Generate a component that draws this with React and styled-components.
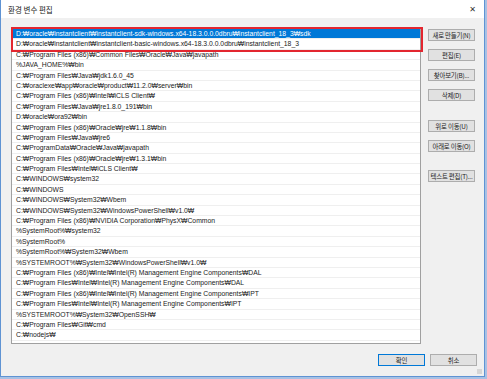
import React from 'react';
import styled, { createGlobalStyle } from 'styled-components';

const paths = [
  "D:₩oracle₩instantclient₩instantclient-sdk-windows.x64-18.3.0.0.0dbru₩instantclient_18_3₩sdk",
  "D:₩oracle₩instantclient₩instantclient-basic-windows.x64-18.3.0.0.0dbru₩instantclient_18_3",
  "C:₩Program Files (x86)₩Common Files₩Oracle₩Java₩javapath",
  "%JAVA_HOME%₩bin",
  "C:₩Program Files₩Java₩jdk1.6.0_45",
  "C:₩oraclexe₩app₩oracle₩product₩11.2.0₩server₩bin",
  "C:₩Program Files (x86)₩Intel₩iCLS Client₩",
  "C:₩Program Files₩Java₩jre1.8.0_191₩bin",
  "D:₩oracle₩ora92₩bin",
  "C:₩Program Files (x86)₩Oracle₩jre₩1.1.8₩bin",
  "C:₩Program Files₩Java₩jre6",
  "C:₩ProgramData₩Oracle₩Java₩javapath",
  "C:₩Program Files (x86)₩Oracle₩jre₩1.3.1₩bin",
  "C:₩Program Files₩Intel₩iCLS Client₩",
  "C:₩WINDOWS₩system32",
  "C:₩WINDOWS",
  "C:₩WINDOWS₩System32₩Wbem",
  "C:₩WINDOWS₩System32₩WindowsPowerShell₩v1.0₩",
  "C:₩Program Files (x86)₩NVIDIA Corporation₩PhysX₩Common",
  "%SystemRoot%₩system32",
  "%SystemRoot%",
  "%SystemRoot%₩System32₩Wbem",
  "%SYSTEMROOT%₩System32₩WindowsPowerShell₩v1.0₩",
  "C:₩Program Files (x86)₩Intel₩Intel(R) Management Engine Components₩DAL",
  "C:₩Program Files₩Intel₩Intel(R) Management Engine Components₩DAL",
  "C:₩Program Files (x86)₩Intel₩Intel(R) Management Engine Components₩IPT",
  "C:₩Program Files₩Intel₩Intel(R) Management Engine Components₩IPT",
  "%SYSTEMROOT%₩System32₩OpenSSH₩",
  "C:₩Program Files₩Git₩cmd",
  "C:₩nodejs₩"
];

const sideButtons = [
  { label: "새로 만들기(N)" },
  { label: "편집(E)" },
  { label: "찾아보기(B)..." },
  { label: "삭제(D)" },
  { label: "위로 이동(U)", space: 11 },
  { label: "아래로 이동(O)" },
  { label: "텍스트 편집(T)...", space: 10 }
];

const App = () => {
  return (
    <>
      <GlobalStyle />
      <Window>
        <TitleBar>
          <Title>환경 변수 편집</Title>
          <Close>✕</Close>
        </TitleBar>
        <Body>
          <Main>
            <ListBox>
              {paths.map((p, i) => (
                <Row key={i} $selected={i === 0}>{p}</Row>
              ))}
              <Highlight />
            </ListBox>
            <Side>
              {sideButtons.map((b, i) => (
                <Button key={i} $space={b.space}>{b.label}</Button>
              ))}
            </Side>
          </Main>
          <Footer>
            <Button $default>확인</Button>
            <Button>취소</Button>
          </Footer>
          <Grip />
        </Body>
      </Window>
    </>
  );
};

export default App;

const GlobalStyle = createGlobalStyle`
  html, body {
    margin: 0;
    padding: 0;
    background: #a7c1e4;
  }
  body {
    font-family: "Liberation Sans", "Noto Sans CJK KR", sans-serif;
  }
`;

const Window = styled.div`
  width: 483px;
  height: 376px;
  border: 1px solid #5f93d3;
  border-top: none;
  background: #f0f0f0;
  display: flex;
  flex-direction: column;
`;

const TitleBar = styled.div`
  height: 18px;
  background: #ffffff;
  display: flex;
  align-items: center;
  justify-content: space-between;
  padding: 0 8px 0 7px;
`;

const Title = styled.div`
  font-family: "Noto Sans CJK KR", sans-serif;
  font-size: 7.5px;
  color: #222;
`;

const Close = styled.div`
  font-family: "DejaVu Sans", sans-serif;
  font-size: 8px;
  color: #333;
`;

const Body = styled.div`
  position: relative;
  flex: 1;
  display: flex;
  flex-direction: column;
`;

const Main = styled.div`
  display: flex;
  padding: 9px 0 0 10px;
  gap: 7px;
`;

const ListBox = styled.div`
  position: relative;
  width: 408px;
  height: 314px;
  border: 1px solid #a0a0a0;
  background: #ffffff;
  padding-top: 1px;
  box-sizing: content-box;
`;

const Row = styled.div`
  height: 10.4px;
  line-height: 10.4px;
  padding-left: 4px;
  font-size: 6.8px;
  white-space: nowrap;
  color: ${p => (p.$selected ? '#ffffff' : '#1a1a1a')};
  background: ${p => (p.$selected ? '#0078d7' : 'transparent')};
  box-shadow: inset 0 -1px 0 #efefef;
`;

const Highlight = styled.div`
  position: absolute;
  left: -1px;
  top: -1px;
  width: 408px;
  height: 21px;
  border: 2px solid #e3262f;
`;

const Side = styled.div`
  display: flex;
  flex-direction: column;
  gap: 8px;
  padding-top: 2px;
`;

const Button = styled.div`
  box-sizing: border-box;
  width: 47px;
  height: 12px;
  margin-top: ${p => (p.$space ? `${p.$space}px` : '0')};
  background: #e1e1e1;
  border: 1px solid ${p => (p.$default ? '#0078d7' : '#adadad')};
  font-family: "Noto Sans CJK KR", sans-serif;
  font-size: 6.4px;
  color: #222;
  display: flex;
  align-items: center;
  justify-content: center;
  white-space: nowrap;
  letter-spacing: -0.2px;
`;

const Footer = styled.div`
  display: flex;
  justify-content: flex-end;
  gap: 5px;
  padding: 10px 7px 0 0;
`;

const Grip = styled.div`
  position: absolute;
  right: 2px;
  bottom: 2px;
  width: 5px;
  height: 5px;
  background: radial-gradient(circle, #b8b8b8 0.6px, transparent 0.8px) 0 0 / 2px 2px;
`;
